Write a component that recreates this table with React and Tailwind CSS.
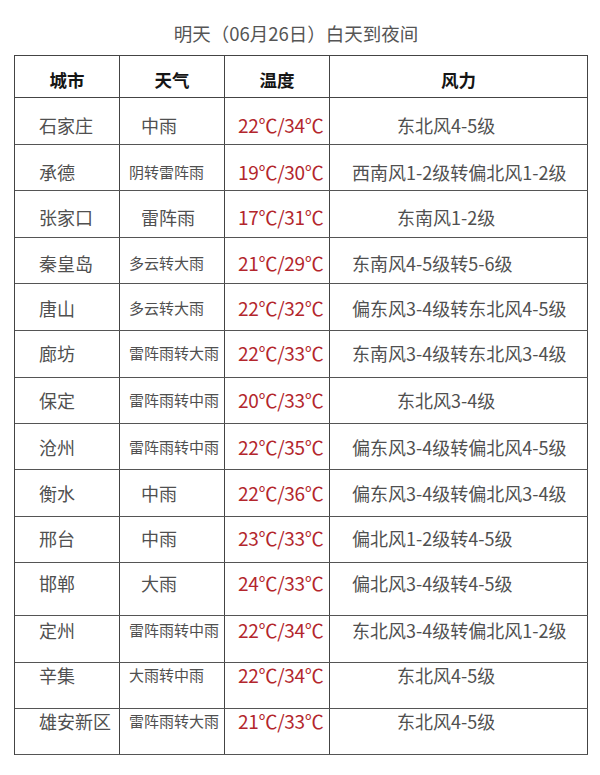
import React from "react";

const rows = [
  ["石家庄", "中雨", "22℃/34℃", "东北风4-5级", 47, 15],
  ["承德", "阴转雷阵雨", "19℃/30℃", "西南风1-2级转偏北风1-2级", 46, 15],
  ["张家口", "雷阵雨", "17℃/31℃", "东南风1-2级", 47, 14],
  ["秦皇岛", "多云转大雨", "21℃/29℃", "东南风4-5级转5-6级", 46, 13],
  ["唐山", "多云转大雨", "22℃/32℃", "偏东风3-4级转东北风4-5级", 47, 12],
  ["廊坊", "雷阵雨转大雨", "22℃/33℃", "东南风3-4级转东北风3-4级", 47, 10],
  ["保定", "雷阵雨转中雨", "20℃/33℃", "东北风3-4级", 46, 10],
  ["沧州", "雷阵雨转中雨", "22℃/35℃", "偏东风3-4级转偏北风4-5级", 46, 11],
  ["衡水", "中雨", "22℃/36℃", "偏东风3-4级转偏北风3-4级", 47, 11],
  ["邢台", "中雨", "23℃/33℃", "偏北风1-2级转4-5级", 46, 9],
  ["邯郸", "大雨", "24℃/33℃", "偏北风3-4级转4-5级", 53, 8],
  ["定州", "雷阵雨转中雨", "22℃/34℃", "东北风3-4级转偏北风1-2级", 47, 2],
  ["辛集", "大雨转中雨", "22℃/34℃", "东北风4-5级", 46, 0],
  ["雄安新区", "雷阵雨转大雨", "21℃/33℃", "东北风4-5级", 46, 0],
];

const font = { fontFamily: '"Noto Sans CJK SC", "Noto Sans", sans-serif' };

export default function App() {
  return (
    <div className="w-[600px] h-[775px] bg-white text-[#505050]" style={font}>
      <div className="h-[55px] pt-[21px] text-center text-[18.5px] leading-[24px] text-[#555] pr-[8px]">
        明天（06月26日）白天到夜间
      </div>
      <div className="ml-[14px] w-[574px] border-l border-t border-[#444]">
        <div className="flex h-[42px] border-b border-[#444] text-[17.5px] font-semibold text-[#151515] leading-[24px]">
          <div className="w-[105px] border-r border-[#444] pt-[12px] text-center">城市</div>
          <div className="w-[105px] border-r border-[#444] pt-[12px] text-center">天气</div>
          <div className="w-[105px] border-r border-[#444] pt-[12px] text-center">温度</div>
          <div className="flex-1 border-r border-[#444] pt-[12px] text-center">风力</div>
        </div>
        {rows.map(([city, weather, temp, wind, h, pt]) => {
          const small = weather.length > 3;
          const shortWind = wind.length <= 7;
          return (
            <div
              key={city}
              className="flex border-b border-[#555] leading-[24px]"
              style={{ height: h }}
            >
              <div
                className="w-[105px] border-r border-[#444] pl-[24px] text-[18px] whitespace-nowrap"
                style={{ paddingTop: pt }}
              >
                {city}
              </div>
              <div
                className={
                  small
                    ? "w-[105px] border-r border-[#444] pl-[9px] text-[15px] whitespace-nowrap"
                    : "w-[105px] border-r border-[#444] pl-[21px] text-[18px] whitespace-nowrap"
                }
                style={{ paddingTop: pt }}
              >
                {weather}
              </div>
              <div
                className="w-[105px] border-r border-[#444] pl-[13px] text-[19px] text-[#b3262c] whitespace-nowrap tracking-[-0.3px]"
                style={{ paddingTop: pt }}
              >
                {temp}
              </div>
              <div
                className={
                  shortWind
                    ? "flex-1 border-r border-[#444] pl-[67px] text-[18px] whitespace-nowrap"
                    : "flex-1 border-r border-[#444] pl-[22px] text-[18px] whitespace-nowrap"
                }
                style={{ paddingTop: pt }}
              >
                {wind}
              </div>
            </div>
          );
        })}
      </div>
    </div>
  );
}
